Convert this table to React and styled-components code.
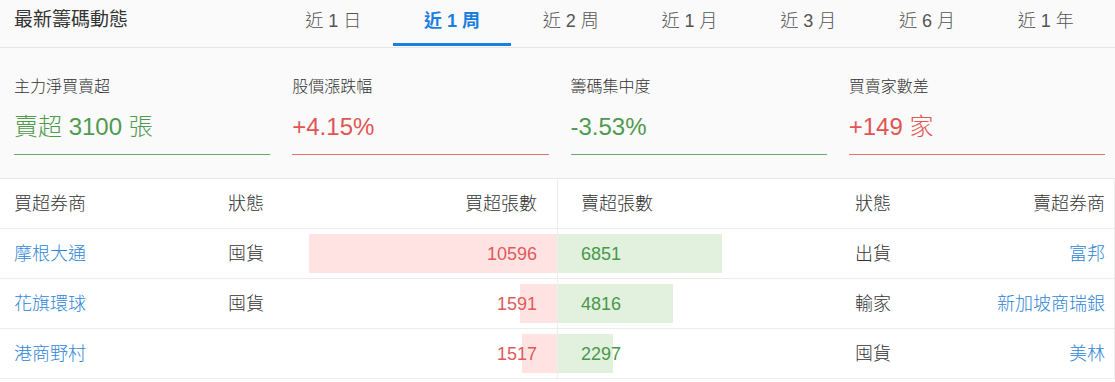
import React from "react";
import styled, { createGlobalStyle } from "styled-components";

const Global = createGlobalStyle`
  html, body { margin: 0; padding: 0; background: #ffffff; }
  body {
    font-family: "Liberation Sans", "Noto Sans CJK TC", sans-serif;
    color: #333;
    font-weight: 300;
  }
  * { box-sizing: border-box; }
`;

const Page = styled.div`
  width: 1115px;
  background: #fff;
`;

const Header = styled.div`
  display: flex;
  height: 48px;
  background: #fafafa;
  border-bottom: 1px solid #e6e6e6;
  padding-right: 10px;
`;

const Title = styled.div`
  width: 274px;
  padding-left: 14px;
  padding-top: 9px;
  font-size: 19px;
  line-height: 22px;
  font-weight: 400;
  color: #333;
`;

const Tabs = styled.div`
  flex: 1;
  display: flex;
`;

const Tab = styled.div`
  flex: 1;
  height: 46px;
  display: flex;
  justify-content: center;
  padding-top: 10px;
  font-size: 18px;
  line-height: 22px;
  color: ${(p) => (p.$active ? "#1a7fe0" : "#555")};
  font-weight: ${(p) => (p.$active ? 700 : 300)};
  border-bottom: 3px solid ${(p) => (p.$active ? "#1a7fe0" : "transparent")};
  white-space: pre;
`;

const Stats = styled.div`
  display: grid;
  grid-template-columns: repeat(4, 1fr);
  gap: 22px;
  padding: 28px 10px 23px 14px;
  background: #fafafa;
  border-bottom: 1px solid #e8e8e8;
`;

const Card = styled.div`
  display: flex;
  flex-direction: column;
  gap: 14px;
  padding-bottom: 12px;
  border-bottom: 1px solid ${(p) => (p.$tone === "up" ? "#e27272" : "#6aa86a")};
`;

const Label = styled.div`
  font-size: 16px;
  line-height: 22px;
  color: #333;
`;

const Value = styled.div`
  font-size: 24px;
  line-height: 30px;
  color: ${(p) => (p.$tone === "up" ? "#e25555" : "#4f9a4f")};
  white-space: pre;
`;

const Table = styled.div`
  border-right: 1px solid #eeeeee;
`;

const Row = styled.div`
  display: grid;
  grid-template-columns: 228px 72px 257px 298px 100px 1fr;
  height: 50px;
  border-bottom: 1px solid #ececec;
  font-size: 18px;
  line-height: 22px;
`;

const Cell = styled.div`
  position: relative;
  display: flex;
  align-items: center;
  justify-content: ${(p) => (p.$align === "right" ? "flex-end" : "flex-start")};
  padding-left: ${(p) => p.$pl || 0}px;
  padding-right: ${(p) => p.$pr || 0}px;
  color: ${(p) => p.$color || "#333"};
  border-left: ${(p) => (p.$divider ? "1px solid #eeeeee" : "none")};
  white-space: nowrap;
`;

const Bar = styled.div`
  position: absolute;
  top: 5px;
  bottom: 5px;
  ${(p) => (p.$side === "left" ? "right: 0;" : "left: 0;")}
  background: ${(p) => (p.$side === "left" ? "#ffe3e3" : "#e1f1de")};
`;

const CellText = styled.span`
  position: relative;
`;

const tabs = ["近 1 日", "近 1 周", "近 2 周", "近 1 月", "近 3 月", "近 6 月", "近 1 年"];

const stats = [
  { label: "主力淨買賣超", value: "賣超 3100 張", tone: "down" },
  { label: "股價漲跌幅", value: "+4.15%", tone: "up" },
  { label: "籌碼集中度", value: "-3.53%", tone: "down" },
  { label: "買賣家數差", value: "+149 家", tone: "up" },
];

const rows = [
  { buyer: "摩根大通", bState: "囤貨", buy: 10596, sell: 6851, sState: "出貨", seller: "富邦" },
  { buyer: "花旗環球", bState: "囤貨", buy: 1591, sell: 4816, sState: "輸家", seller: "新加坡商瑞銀" },
  { buyer: "港商野村", bState: "", buy: 1517, sell: 2297, sState: "囤貨", seller: "美林" },
];

const MAX = 10596;
const LINK = "#2e86d6";
const RED = "#e05a5a";
const GREEN = "#4a984a";

export default function App() {
  return (
    <>
      <Global />
      <Page>
        <Header>
          <Title>最新籌碼動態</Title>
          <Tabs>
            {tabs.map((t, i) => (
              <Tab key={t} $active={i === 1}>
                {t}
              </Tab>
            ))}
          </Tabs>
        </Header>
        <Stats>
          {stats.map((s) => (
            <Card key={s.label} $tone={s.tone}>
              <Label>{s.label}</Label>
              <Value $tone={s.tone}>{s.value}</Value>
            </Card>
          ))}
        </Stats>
        <Table>
          <Row>
            <Cell $pl={14}>買超券商</Cell>
            <Cell>狀態</Cell>
            <Cell $align="right" $pr={20}>買超張數</Cell>
            <Cell $divider $pl={23}>賣超張數</Cell>
            <Cell>狀態</Cell>
            <Cell $align="right" $pr={9}>賣超券商</Cell>
          </Row>
          {rows.map((r) => (
            <Row key={r.buyer}>
              <Cell $pl={14} $color={LINK}>{r.buyer}</Cell>
              <Cell>{r.bState}</Cell>
              <Cell $align="right" $pr={20} $color={RED}>
                <Bar $side="left" style={{ width: `${(r.buy / MAX) * 248}px` }} />
                <CellText>{r.buy}</CellText>
              </Cell>
              <Cell $divider $pl={23} $color={GREEN}>
                <Bar $side="right" style={{ width: `${(r.sell / MAX) * 253}px` }} />
                <CellText>{r.sell}</CellText>
              </Cell>
              <Cell>{r.sState}</Cell>
              <Cell $align="right" $pr={9} $color={LINK}>{r.seller}</Cell>
            </Row>
          ))}
        </Table>
      </Page>
    </>
  );
}
